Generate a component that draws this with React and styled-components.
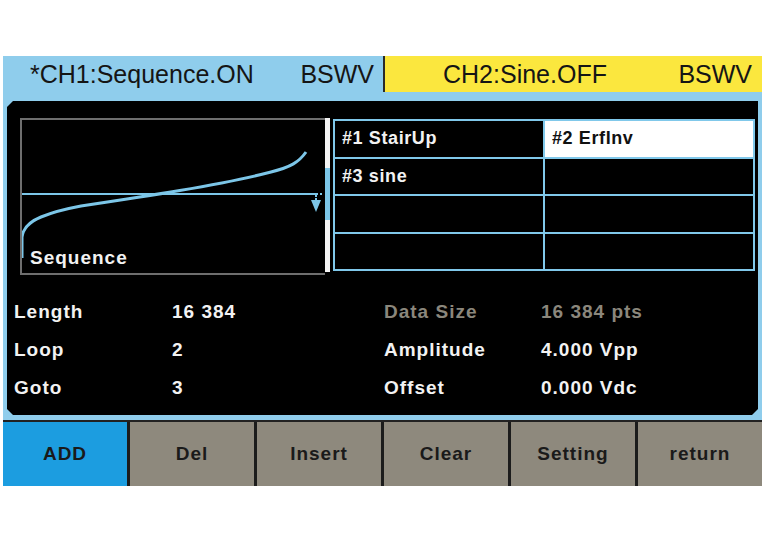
import React from "react";
import styled, { createGlobalStyle } from "styled-components";

const GlobalStyle = createGlobalStyle`
  html, body {
    margin: 0;
    padding: 0;
    background: #ffffff;
  }
  body {
    font-family: "Liberation Sans", Arial, sans-serif;
  }
`;

const Screen = styled.div`
  margin: 56px 0 0 3px;
  width: 759px;
  display: flex;
  flex-direction: column;
`;

const TabRow = styled.div`
  display: flex;
  height: 36px;
`;

const Tab = styled.div`
  display: flex;
  align-items: center;
  box-sizing: border-box;
  width: ${(p) => p.width};
  flex: ${(p) => (p.width ? "none" : "1")};
  padding: ${(p) => p.pad};
  background: ${(p) => (p.active ? "#8fcdec" : "#fbe73e")};
  border-left: ${(p) => (p.active ? "none" : "2px solid #2a2a2a")};
  font-size: 25px;
  color: #151515;
  white-space: nowrap;
`;

const TabTag = styled.span`
  margin-left: auto;
`;

const Body = styled.div`
  background: #8fcdec;
  padding: 9px 4px 5px 4px;
  border-bottom: 2px solid #222;
`;

const Panel = styled.div`
  background: #000;
  height: 314px;
  display: flex;
  flex-direction: column;
  clip-path: polygon(6px 0, 100% 0, 100% calc(100% - 6px), calc(100% - 6px) 100%, 6px 100%, 0 calc(100% - 6px), 0 6px);
`;

const TopSection = styled.div`
  display: flex;
  align-items: flex-start;
  padding: 17px 3px 0 13px;
`;

const WaveBox = styled.div`
  position: relative;
  width: 305px;
  height: 157px;
  box-sizing: border-box;
  border: 2px solid #6e6e6e;
  border-right: none;
`;

const WaveLabel = styled.span`
  position: absolute;
  left: 8px;
  bottom: 4px;
  font-size: 19px;
  font-weight: bold;
  letter-spacing: 1px;
  color: #f2f2f2;
`;

const Scrollbar = styled.div`
  width: 5px;
  height: 154px;
  background: #f4f4f4;
  display: flex;
  flex-direction: column;
  padding-top: 50px;
  box-sizing: border-box;
  margin-right: 3px;
`;

const Thumb = styled.div`
  height: 52px;
  background: #7cc6e8;
`;

const Table = styled.div`
  margin-top: 1px;
  width: 422px;
  height: 152px;
  display: grid;
  grid-template-columns: 1fr 1fr;
  grid-template-rows: repeat(4, 1fr);
  gap: 2px;
  background: #80c8ea;
  border: 2px solid #80c8ea;
  box-sizing: border-box;
`;

const Cell = styled.div`
  display: flex;
  align-items: center;
  padding-left: 7px;
  background: ${(p) => (p.selected ? "#ffffff" : "#000000")};
  color: ${(p) => (p.selected ? "#111" : "#f2f2f2")};
  font-size: 18px;
  font-weight: bold;
  letter-spacing: 0.6px;
`;

const Params = styled.div`
  display: grid;
  grid-template-columns: 158px 212px 157px 1fr;
  grid-auto-rows: 38px;
  padding: 18px 0 0 7px;
`;

const ParamText = styled.div`
  display: flex;
  align-items: center;
  font-size: 19px;
  font-weight: bold;
  letter-spacing: 1px;
  color: ${(p) => (p.dim ? "#8b877c" : "#f2f2f2")};
`;

const ButtonRow = styled.div`
  display: grid;
  grid-template-columns: repeat(6, 1fr);
  gap: 3px;
  background: #1c1c1c;
  height: 64px;
`;

const SoftKey = styled.div`
  display: flex;
  align-items: center;
  justify-content: center;
  background: ${(p) => (p.active ? "#1c9de0" : "#8e897d")};
  color: #1a1a1a;
  font-size: 19px;
  font-weight: bold;
  letter-spacing: 1px;
`;

const curve =
  "M1 140 L1 119 C2 110 8 104 20 99 C32 94 44 91 60 88 C120 79 200 67 250 54 C270 49 278 44 285 34";

const Wave = () => (
  <svg width="303" height="153" viewBox="0 0 303 153" style={{ position: "absolute", left: 0, top: 0 }}>
    <line x1="0" y1="74" x2="294" y2="74" stroke="#7cc6e8" strokeWidth="2" />
    <line x1="294" y1="74" x2="302" y2="74" stroke="#7cc6e8" strokeWidth="2" strokeDasharray="2 2" />
    <line x1="294" y1="75" x2="294" y2="80" stroke="#7cc6e8" strokeWidth="2" strokeDasharray="2 1" />
    <polygon points="289,80 299,80 294,92" fill="#7cc6e8" />
    <path d={curve} fill="none" stroke="#7cc6e8" strokeWidth="3" transform="translate(-1,-2)" />
  </svg>
);

const cells = ["#1 StairUp", "#2 ErfInv", "#3 sine", "", "", "", "", ""];

const params = [
  ["Length", "16 384", "Data Size", "16 384 pts"],
  ["Loop", "2", "Amplitude", "4.000 Vpp"],
  ["Goto", "3", "Offset", "0.000 Vdc"],
];

const keys = ["ADD", "Del", "Insert", "Clear", "Setting", "return"];

const App = () => {
  return (
    <>
      <GlobalStyle />
      <Screen>
        <TabRow>
          <Tab active width="380px" pad="0 9px 0 27px">
            *CH1:Sequence.ON<TabTag>BSWV</TabTag>
          </Tab>
          <Tab pad="0 10px 0 58px">
            CH2:Sine.OFF<TabTag>BSWV</TabTag>
          </Tab>
        </TabRow>
        <Body>
          <Panel>
            <TopSection>
              <WaveBox>
                <Wave />
                <WaveLabel>Sequence</WaveLabel>
              </WaveBox>
              <Scrollbar>
                <Thumb />
              </Scrollbar>
              <Table>
                {cells.map((c, i) => (
                  <Cell key={i} selected={i === 1}>
                    {c}
                  </Cell>
                ))}
              </Table>
            </TopSection>
            <Params>
              {params.map((row) =>
                row.map((t, j) => (
                  <ParamText key={row[0] + j} dim={row[0] === "Length" && j >= 2}>
                    {t}
                  </ParamText>
                ))
              )}
            </Params>
          </Panel>
        </Body>
        <ButtonRow>
          {keys.map((k, i) => (
            <SoftKey key={k} active={i === 0}>
              {k}
            </SoftKey>
          ))}
        </ButtonRow>
      </Screen>
    </>
  );
};

export default App;
